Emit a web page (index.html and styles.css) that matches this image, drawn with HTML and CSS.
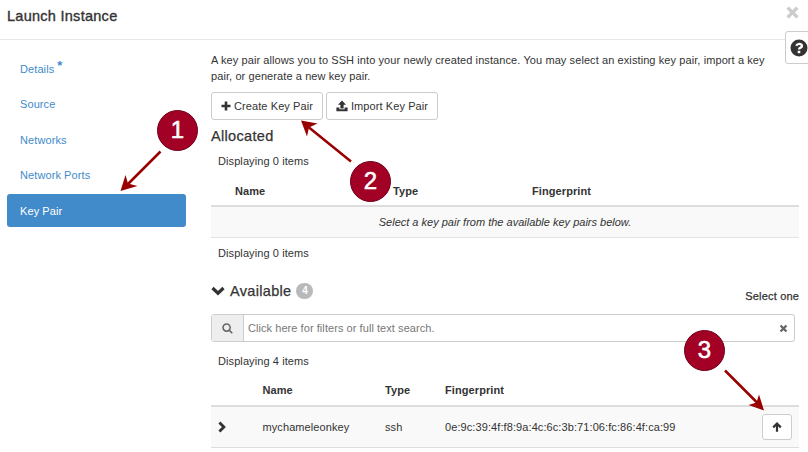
FILE: index.html
```html
<!DOCTYPE html>
<html lang="en">
<head>
<meta charset="utf-8">
<title>Launch Instance</title>
<link rel="stylesheet" href="styles.css">
</head>
<body>
<header class="modal-header">
  <h1 class="title">Launch Instance</h1>
  <svg class="close" viewBox="0 0 12 12"><path d="M1.500 1.500l9 9M10.500 1.500l-9 9"/></svg>
</header>
<div class="help">
  <svg viewBox="0 0 18 18"><circle cx="9" cy="9" r="8.5"/><path d="M6.2 6.7Q7.2 4.8 9.2 4.8C12.6 4.8 12.5 8 10.5 8.6Q9 9.2 9 10.5"/><rect x="7.7" y="11.8" width="2.6" height="2.4"/></svg>
</div>
<div class="modal-body">
  <nav class="steps">
    <a class="step">Details<span class="required">*</span></a>
    <a class="step">Source</a>
    <a class="step">Networks</a>
    <a class="step">Network Ports</a>
    <a class="step active">Key Pair</a>
  </nav>
  <main class="content">
    <p class="intro">A key pair allows you to SSH into your newly created instance. You may select an existing key pair, import a key<br>pair, or generate a new key pair.</p>
    <div class="buttons">
      <button class="btn"><svg class="icon-plus" viewBox="0 0 10 10"><path d="M5 .5v9M.5 5h9"/></svg><span>Create Key Pair</span></button>
      <button class="btn"><svg class="icon-upload" viewBox="0 0 12 12"><path d="M6 .5l4 4.200H7.600v3.700H4.400V4.700H2zM.4 7.600h3v1.700h5.200V7.600h3v3.700H.4z"/></svg><span>Import Key Pair</span></button>
    </div>
    <h2 class="heading allocated">Allocated</h2>
    <div class="count count-top">Displaying 0 items</div>
    <div class="table-head allocated-grid"><span>Name</span><span>Type</span><span>Fingerprint</span></div>
    <div class="empty">Select a key pair from the available key pairs below.</div>
    <div class="count count-bottom">Displaying 0 items</div>
    <div class="available-bar">
      <h2 class="heading"><svg class="icon-down" viewBox="0 0 14 10"><path d="M1.500 2L7 7.200 12.500 2"/></svg><span>Available</span><span class="badge">4</span></h2>
      <span class="select-one">Select one</span>
    </div>
    <div class="search">
      <span class="addon"><svg viewBox="0 0 12 12"><circle cx="5" cy="5" r="3.9"/><path d="M7.8 7.8l3.400 3.400"/></svg></span>
      <span class="placeholder">Click here for filters or full text search.</span>
      <svg class="clear" viewBox="0 0 10 10"><path d="M1.7 1.7l6.6 6.6M8.3 1.7L1.7 8.3"/></svg>
    </div>
    <div class="count count-available">Displaying 4 items</div>
    <div class="table-head available-grid"><span></span><span>Name</span><span>Type</span><span>Fingerprint</span></div>
    <div class="row available-grid">
      <svg class="icon-right" viewBox="0 0 8 12"><path d="M1.400 1.500L5.900 6l-4.500 4.500"/></svg>
      <span>mychameleonkey</span><span>ssh</span><span>0e:9c:39:4f:f8:9a:4c:6c:3b:71:06:fc:86:4f:ca:99</span>
      <button class="allocate"><svg viewBox="0 0 10 10"><path d="M5 9.7V1.8M1.2 5.4L5 1.6l3.8 3.8"/></svg></button>
    </div>
  </main>
</div>
<svg class="arrows" viewBox="0 0 808 452">
  <path class="shaft" d="M160.500 151.500L128 184M351 161.500L309 127.500M725 370.500L757 402.500"/>
  <path class="tip" d="M120.500 191L125.500 175L128 183.500L137.500 186zM301 120.500L317.500 123.500L309 127.500L307 136.500zM764 410.500L748.500 405L756.500 402.500L759 394.500z"/>
</svg>
<span class="marker marker-1">1</span>
<span class="marker marker-2">2</span>
<span class="marker marker-3">3</span>
</body>
</html>
```
FILE: styles.css
```css
* { box-sizing: border-box; }
body {
  margin: 0;
  width: 808px;
  height: 452px;
  overflow: hidden;
  position: relative;
  background: #fff;
  color: #333;
  font: 11px/16px "Liberation Sans", Arial, sans-serif;
  letter-spacing: .09px;
}
svg { display: block; flex: none; fill: none; }
h1, h2, p { margin: 0; }
button { font: inherit; color: inherit; letter-spacing: inherit; }
.modal-header {
  display: flex;
  justify-content: space-between;
  align-items: flex-start;
  height: 40px;
  padding: 6px 9px 0 7px;
  border-bottom: 1px solid #e8e8e8;
}
.title { font-size: 14.500px; line-height: 20px; font-weight: 400; letter-spacing: .27px; -webkit-text-stroke: .35px #333; }
.close { width: 13px; height: 13px; stroke: #ccc; stroke-width: 3.200; }
.help {
  position: absolute;
  left: 785px;
  top: 31px;
  width: 30px;
  height: 33px;
  padding: 7px 0 0 4px;
  border: 1px solid #ccc;
  border-radius: 3px;
  background: #fff;
}
.help svg { width: 18px; height: 18px; }
.help circle { fill: #333; }
.help path { stroke: #fff; stroke-width: 2.300; }
.help rect { fill: #fff; }
.modal-body { display: flex; padding: 12px 9px 0 7px; gap: 25px; }
.steps { display: flex; flex-direction: column; gap: 2.500px; width: 179px; }
.step {
  display: flex;
  align-items: center;
  height: 33px;
  padding-left: 13px;
  border-radius: 3px;
  color: #428bca;
}
.required { font-size: 13px; font-weight: 700; margin: -6px 0 0 3px; }
.active { background: #428bca; color: #fff; }
.content { width: 588px; }
.intro { height: 40px; line-height: 16px; white-space: nowrap; }
.buttons { display: flex; gap: 3px; }
.btn {
  display: flex;
  align-items: center;
  justify-content: center;
  gap: 3px;
  width: 112px;
  height: 28px;
  padding: 0;
  border: 1px solid #ccc;
  border-radius: 3px;
  background: #fff;
}
.icon-plus { width: 10px; height: 10px; stroke: #333; stroke-width: 2.600; }
.icon-upload { width: 12px; height: 12px; fill: #333; }
.heading {
  display: flex;
  align-items: center;
  font-size: 14.500px;
  line-height: 20px;
  font-weight: 400;
  letter-spacing: .32px;
  -webkit-text-stroke: .25px #333;
}
.allocated { height: 33px; padding-bottom: 0; line-height: 33px; }
.count { padding-left: 7px; }
.count-top { height: 21px; }
.table-head { display: grid; font-weight: 700; border-bottom: 2px solid #ddd; }
.allocated-grid { grid-template-columns: 158px 139px 1fr; padding: 9px 0 0 24px; height: 33px; }
.empty {
  height: 31px;
  padding-top: 7px;
  background: #f9f9f9;
  border-bottom: 1px solid #e3e3e3;
  text-align: center;
  font-style: italic;
  letter-spacing: 0;
}
.count-bottom { padding-top: 7px; height: 42px; }
.available-bar { display: flex; justify-content: space-between; height: 34px; }
.icon-down { width: 14px; height: 10px; margin-right: 5px; stroke: #333; stroke-width: 3.200; }
.available-bar .heading { height: 22px; }
.badge {
  width: 17px;
  height: 16px;
  margin-left: 5px;
  border-radius: 8px;
  background: #b9b9b9;
  color: #fff;
  font-size: 10px;
  line-height: 16px;
  font-weight: 700;
  letter-spacing: 0;
  text-align: center;
  -webkit-text-stroke: 0;
}
.select-one { padding-top: 8px; letter-spacing: .17px; -webkit-text-stroke: .25px #333; }
.search {
  display: flex;
  align-items: center;
  width: 584px;
  height: 28px;
  padding-right: 6px;
  border: 1px solid #ccc;
  border-radius: 3px;
  color: #777;
}
.addon {
  display: flex;
  align-items: center;
  justify-content: center;
  width: 32px;
  height: 26px;
  background: #eee;
  border-right: 1px solid #ccc;
}
.addon svg { width: 11px; height: 11px; stroke: #666; stroke-width: 1.700; }
.placeholder { flex: 1; padding-left: 4px; letter-spacing: .06px; }
.clear { width: 9px; height: 9px; stroke: #666; stroke-width: 2.600; }
.count-available { padding-top: 11px; height: 32px; }
.available-grid { display: grid; grid-template-columns: 44.500px 122.500px 60px 1fr 30px; padding-left: 7px; padding-right: 7px; }
.table-head.available-grid { height: 33px; padding-top: 8px; }
.row { height: 41px; align-items: center; background: #f9f9f9; border-bottom: 1px solid #ddd; }
.icon-right { width: 8px; height: 12px; stroke: #333; stroke-width: 2.800; }
.allocate {
  display: flex;
  align-items: center;
  justify-content: center;
  width: 30px;
  height: 26px;
  padding: 0;
  border: 1px solid #ccc;
  border-radius: 3px;
  background: #fff;
}
.allocate svg { width: 10px; height: 10px; stroke: #333; stroke-width: 2.200; }
.arrows { position: absolute; left: 0; top: 0; width: 808px; height: 452px; }
.shaft { stroke: #990000; stroke-width: 2.500; }
.tip { fill: #990000; }
.marker {
  position: absolute;
  width: 41px;
  height: 41px;
  border: 1px solid #6f0018;
  border-radius: 50%;
  background: #a20025;
  color: #fff;
  font-size: 24px;
  line-height: 38px;
  text-align: center;
  -webkit-text-stroke: .6px #fff;
}
.marker-1 { left: 157px; top: 110px; }
.marker-2 { left: 350px; top: 161px; }
.marker-3 { left: 684px; top: 330px; }
```
